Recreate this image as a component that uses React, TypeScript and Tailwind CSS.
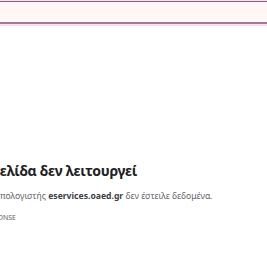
export default function App() {
  return (
    <div className="w-[267px] h-[258px] overflow-hidden bg-white" style={{ fontFamily: '"Noto Sans", "Open Sans", sans-serif' }}>
      {/* top band */}
      <div className="h-px bg-[#f3e4ec]" />
      <div className="h-px bg-[#8f5c83]" />
      <div className="h-[20px] bg-[#fff6f6]" />
      <div className="h-[2px] bg-[#a9739c]" />
      <div className="h-px bg-[#f7e9ef]" />
      <div className="h-px bg-[#f1dbe6]" />

      <div className="pt-[135px] whitespace-nowrap">
        <h1 className="-ml-[58px] text-[14px] leading-[20px] font-bold tracking-[-0.3px] text-[#202124]">Αυτή η σελίδα δεν λειτουργεί</h1>
        <p className="-ml-[14px] mt-[8px] text-[8.6px] leading-[14px] text-[#5f6368]">
          Ο υπολογιστής <span className="font-bold text-[#3c4043]">eservices.oaed.gr</span> δεν έστειλε δεδομένα.
        </p>
        <div className="-ml-[60px] mt-[10px] text-[7px] leading-[10px] text-[#5f6368] uppercase">ERR_EMPTY_RESPONSE</div>
      </div>
    </div>
  );
}
